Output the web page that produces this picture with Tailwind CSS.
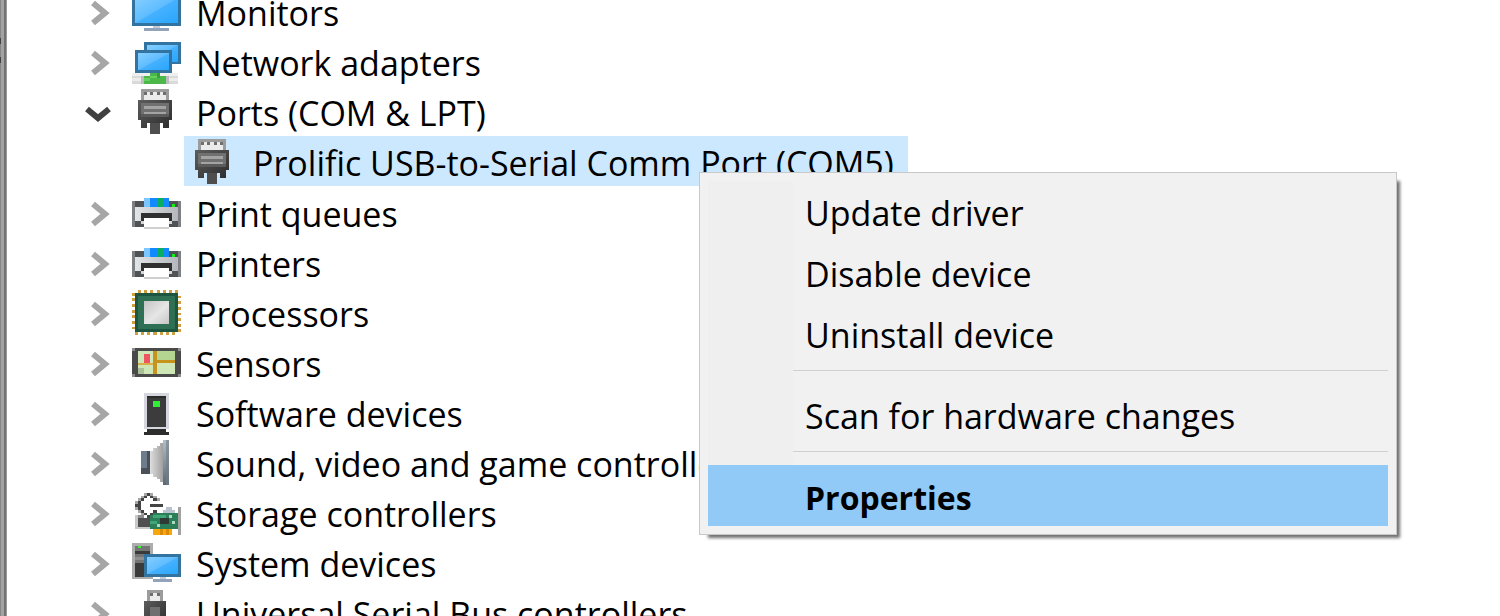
<!DOCTYPE html>
<html lang="en">
<head>
  <meta charset="UTF-8" />
  <meta name="viewport" content="width=device-width, initial-scale=1.0" />
  <title>Device Manager</title>
  <script src="https://cdn.jsdelivr.net/npm/@tailwindcss/browser@4"></script>
</head>
<body class="relative flex h-screen overflow-hidden bg-white font-['Open_Sans','Noto_Sans',sans-serif] text-[34px] text-black">

  <!-- Icon sheet, every icon sits on a 16x16 grid -->
  <svg class="absolute h-0 w-0" aria-hidden="true">
    <defs>
      <linearGradient id="screen" x1="0" y1="0" x2="1" y2="1">
        <stop offset="0" stop-color="#86cfff" />
        <stop offset=".5" stop-color="#5fbcff" />
        <stop offset=".52" stop-color="#45b1ff" />
        <stop offset="1" stop-color="#2aa6fb" />
      </linearGradient>
      <linearGradient id="metal" x1="0" y1="0" x2="1" y2="1">
        <stop offset="0" stop-color="#c4c4c4" />
        <stop offset=".55" stop-color="#e6e6e6" />
        <stop offset="1" stop-color="#c6c6c6" />
      </linearGradient>
      <linearGradient id="body" x1="0" y1="0" x2="1" y2="0">
        <stop offset="0" stop-color="#e2e4e6" />
        <stop offset="1" stop-color="#b4b8bc" />
      </linearGradient>
      <linearGradient id="cone" x1="0" y1="0" x2="1" y2="0">
        <stop offset="0" stop-color="#dcdcdc" />
        <stop offset="1" stop-color="#a2a2a2" />
      </linearGradient>
      <linearGradient id="rim" x1="0" y1="0" x2="0" y2="1">
        <stop offset="0" stop-color="#b4bec8" />
        <stop offset="1" stop-color="#5c6873" />
      </linearGradient>
      <linearGradient id="shell" x1="0" y1="0" x2="1" y2="1">
        <stop offset="0" stop-color="#5c5c5c" />
        <stop offset="1" stop-color="#2c2c2c" />
      </linearGradient>

      <g id="monitor">
        <path fill="#33739f" d="M0 2h16v11H0z" />
        <path fill="url(#screen)" d="M1 3h14v9H1z" />
        <path fill="#c3ccd6" d="M7 13h2v1H7z" />
        <path fill="#93a3b9" d="M4 14h8v1H4z" />
      </g>

      <g id="network">
        <path fill="#33739f" d="M4 1h12v8H4z" />
        <path fill="url(#screen)" d="M5 2h10v6H5z" />
        <path fill="#33739f" d="M1 4h12v8H1z" />
        <path fill="url(#screen)" d="M2 5h10v6H2z" />
        <path fill="#efefef" d="M0 12h15v1H0z" />
        <path fill="#dadada" d="M0 13h15v3H0z" />
        <path fill="#ececec" d="M0 14h15v1H0z" />
        <path fill="#bdbdbd" d="M3 13h1v3H3zM11 13h1v3h-1z" />
        <path fill="#4cb84a" d="M6 12h3v1h2v3H4v-3h2z" />
        <path fill="#65cf5f" d="M6 13h2v1H6zM4 14h2v1H4z" />
        <path fill="#38a03a" d="M8 12h1v2H8z" />
      </g>

      <g id="port">
        <path fill="#9c9c9c" d="M3 0h9v4H3z" />
        <path fill="#ebebeb" d="M4 1h7v3H4z" />
        <path fill="#6e6e6e" d="M4 1h1v1H4zM6 1h1v1H6zM8 1h1v1H8zM10 1h1v1h-1z" />
        <path fill="url(#shell)" d="M2 4h11v7H2zM3 11h9v1H3zM3 12h2v2H3zM10 12h2v2h-2z" />
        <path fill="#707070" d="M3 5h9v5H3z" />
        <path fill="#5a5a5a" d="M3 9h9v1H3z" />
        <path fill="#a3a3a3" d="M4 6h7v1H4zM4 8h7v1H4z" />
        <path fill="#4e4e4e" d="M6 12h3v4H6z" />
      </g>

      <g id="printer">
        <path fill="#4f5355" d="M0 4h4v2H0zM12 4h4v2h-4zM0 11h4v2H0zM12 11h4v2h-4z" />
        <path fill="#7d8183" d="M0 4h1v9H0zM15 4h1v9h-1z" />
        <path fill="url(#body)" d="M1 6h14v5H1z" />
        <path fill="#7cc5ff" d="M4 3h2v3H4z" />
        <path fill="#128aff" d="M6 3h2v3H6zM10 3h2v3h-2z" />
        <path fill="#0aae62" d="M8 3h2v3H8z" />
        <path fill="#10f010" d="M13 5h1v1h-1z" />
        <path fill="#2f2f2f" d="M3 8h10v3H3z" />
        <path fill="#d9d9d9" d="M3 11h1v1H3zM12 11h1v1h-1z" />
        <path fill="#fff" d="M4 10h8v3H4z" />
        <path fill="#cfcfcf" d="M4 13h8v1H4z" />
      </g>

      <g id="processor">
        <path fill="#d0a040" d="M2 0h1v1H2zM4 0h1v1H4zM6 0h1v1H6zM8 0h1v1H8zM10 0h1v1h-1zM12 0h1v1h-1zM14 0h1v1h-1zM1 15h1v1H1zM3 15h1v1H3zM5 15h1v1H5zM7 15h1v1H7zM9 15h1v1H9zM11 15h1v1h-1zM13 15h1v1h-1zM0 1h1v1H0zM0 3h1v1H0zM0 5h1v1H0zM0 7h1v1H0zM0 9h1v1H0zM0 11h1v1H0zM0 13h1v1H0zM15 2h1v1h-1zM15 4h1v1h-1zM15 6h1v1h-1zM15 8h1v1h-1zM15 10h1v1h-1zM15 12h1v1h-1zM15 14h1v1h-1z" />
        <path fill="#1d5640" d="M1 1h14v14H1z" />
        <path fill="#2f6f53" d="M2 2h12v12H2z" />
        <path fill="url(#metal)" d="M4 4h8v8H4z" />
      </g>

      <g id="sensor">
        <path fill="#4a4a4a" d="M0 3h16v10H0z" />
        <path fill="#8c8c8c" d="M0 3h1v1H0zM15 3h1v1h-1zM0 12h1v1H0zM15 12h1v1h-1z" />
        <path fill="#cfe6b6" d="M2 4h12v8H2z" />
        <path fill="#b4d592" d="M8 4h6v3H8z" />
        <path fill="#a9bf98" d="M2 10h2v2H2z" />
        <path fill="#d8b04a" d="M2 8h6v1H2z" />
        <path fill="#c6931c" d="M7 4h1v8H7zM8 7h6v1H8z" />
        <path fill="#ee5560" d="M4 5h2v3H4z" />
      </g>

      <g id="software">
        <path fill="#d6d7de" d="M4 1h8v13H4z" />
        <path fill="#3c3c3c" d="M5 2h6v11H5z" />
        <path fill="#2b2b2b" d="M5 2h6v1H5z" />
        <path fill="#2fee35" d="M7 4h2v2H7z" />
        <path fill="#2d2d2d" d="M5 14h6v1h1v1H4v-1h1z" />
      </g>

      <g id="sound">
        <path fill="#6d7d8b" d="M3 4h2v8H3z" />
        <path fill="#4a5058" d="M5 4h1v8H5zM3 10h3v2H3z" />
        <path fill="url(#cone)" d="M6 4h1V3h1V2h1V1h1v14H9v-1H8v-1H7v-1H6z" />
        <path fill="url(#rim)" d="M10 0h2v16h-2z" />
        <path fill="#6f7b87" fill-opacity=".6" d="M11 0h1v16h-1z" />
      </g>

      <g id="storage">
        <path fill="#c9c9c9" d="M1 9h1v5H1zM2 13h4v1H2z" />
        <path fill="#505050" d="M2 10h4v3H2z" />
        <path fill="#8e8e8e" d="M2 9h2v1H2z" />
        <path fill="#444" d="M5 1h1v1H5zM4 2h1v1H4zM6 2h1v1H6zM3 3h1v1H3zM7 3h1v1H7zM2 4h1v1H2zM1 5h2v1H1zM2 6h1v1H2zM3 7h1v1H3zM4 8h1v1H4zM5 9h1v1H5zM6 8h1v1H6zM7 7h1v1H7zM6 5h4v1H6z" />
        <path fill="#a6a6a6" d="M4 1h1v1H4zM6 1h1v1H6zM3 2h1v1H3zM7 2h1v1H7zM2 3h1v1H2zM8 3h1v1H8zM1 4h1v1H1zM1 6h1v1H1zM2 7h1v1H2zM3 8h1v1H3z" />
        <path fill="#b9c2cc" d="M11 6h2v1h1v1h-4V7h1z" />
        <path fill="#2b7f58" d="M7 8h8v6H6V9h1z" />
        <path fill="#3fa677" d="M7 9h4v1H7zM6 11h2v1H6z" />
        <path fill="#2f3a36" d="M9 10h3v2H9z" />
        <path fill="#a9d8c0" d="M8 12h1v1H8zM12 9h1v1h-1zM13 11h1v1h-1z" />
        <path fill="#f7a60c" d="M7 14h6v2H7z" />
        <path fill="#d98a06" d="M9 14h1v2H9zM11 14h1v2h-1z" />
        <path fill="#a2a2a2" d="M15 6h1v10h-1z" />
      </g>

      <g id="system">
        <path fill="#adadad" d="M0 1h7v13H0z" />
        <path fill="#757575" d="M1 2h5v11H1z" />
        <path fill="#3a3a3a" d="M1 4h5v1H1zM1 8h3v5H1z" />
        <path fill="#8e8e8e" d="M1 6h3v1H1z" />
        <path fill="#3df03d" d="M2 2h1v1H2z" />
        <path fill="#33739f" d="M4 5h12v8H4z" />
        <path fill="url(#screen)" d="M5 6h10v6H5z" />
        <path fill="#c3ccd6" d="M9 13h2v1H9z" />
        <path fill="#93a3b9" d="M7 14h6v1H7z" />
      </g>

      <g id="usb">
        <path fill="#9c9c9c" d="M5 0h5v4H5z" />
        <path fill="#ebebeb" d="M6 1h3v3H6z" />
        <path fill="#6e6e6e" d="M6 1h1v1H6zM8 1h1v1H8z" />
        <path fill="url(#shell)" d="M4 4h7v9H4z" />
        <path fill="#707070" d="M6 6h3v6H6z" />
        <path fill="#4e4e4e" d="M6 13h3v3H6z" />
      </g>
    </defs>
  </svg>

  <!-- Window edge -->
  <div class="flex w-[7px] shrink-0">
    <div class="w-px bg-[#868686]">
      <div class="mt-[38px] h-[6px] bg-[#404040]"></div>
      <div class="mt-[13px] h-[6px] bg-[#404040]"></div>
    </div>
    <div class="w-[3px] bg-[#a2a2a2]"></div>
    <div class="w-[2px] bg-[#727272]"></div>
    <div class="w-px bg-[#9a9a9a]"></div>
  </div>

  <main class="min-w-0 flex-1 pl-[77px]">
    <ul id="devices" role="tree" aria-label="Devices" class="-mt-[14px]"></ul>
  </main>

  <!-- Context menu -->
  <div role="menu" aria-label="Device actions" class="absolute left-[699px] top-[172px] w-[698px] border border-[#c8c8c8] bg-[#f1f1f1] p-2 shadow-[6px_6px_3px_-3px_#707070]">
    <div class="bg-linear-to-r from-[#efefef] from-[85px] to-[#f1f1f1] to-[85px]">
      <button role="menuitem" class="block h-[61px] w-full pl-[97px] pt-1 text-left leading-[57px] hover:bg-[#91c9f7]">Update driver</button>
      <button role="menuitem" class="block h-[61px] w-full pl-[97px] pt-1 text-left leading-[57px] hover:bg-[#91c9f7]">Disable device</button>
      <button role="menuitem" class="block h-[61px] w-full pl-[97px] pt-1 text-left leading-[57px] hover:bg-[#91c9f7]">Uninstall device</button>
      <div role="separator" class="ml-[85px] h-5 pt-[6px]"><div class="h-px bg-[#d0d0d0]"></div></div>
      <button role="menuitem" class="block h-[61px] w-full pl-[97px] pt-1 text-left leading-[57px] hover:bg-[#91c9f7]">Scan for hardware changes</button>
      <div role="separator" class="ml-[85px] h-5 pt-[6px]"><div class="h-px bg-[#d0d0d0]"></div></div>
      <button role="menuitem" class="block h-[61px] w-full bg-[#91c9f7] pl-[97px] pt-1 text-left text-[32px] font-bold leading-[57px]">Properties</button>
    </div>
  </div>

  <script>
    const devices = [
      { name: "Monitors", icon: "monitor" },
      { name: "Network adapters", icon: "network" },
      { name: "Ports (COM & LPT)", icon: "port", children: [
        { name: "Prolific USB-to-Serial Comm Port (COM5)", icon: "port" }
      ] },
      { name: "Print queues", icon: "printer" },
      { name: "Printers", icon: "printer" },
      { name: "Processors", icon: "processor" },
      { name: "Sensors", icon: "sensor" },
      { name: "Software devices", icon: "software" },
      { name: "Sound, video and game controllers", icon: "sound" },
      { name: "Storage controllers", icon: "storage" },
      { name: "System devices", icon: "system" },
      { name: "Universal Serial Bus controllers", icon: "usb" }
    ];

    const icon = (id) => `
      <svg class="h-[45px] w-[49px] shrink-0" viewBox="0 0 16 16" preserveAspectRatio="none" shape-rendering="crispEdges" aria-hidden="true"><use href="#${id}" /></svg>`;

    const label = (text) => `<span class="whitespace-nowrap pt-1 leading-[46px]">${text.replace("&", "&amp;")}</span>`;

    const chevron = (open) => open
      ? `<path d="M3 11 14 20 25 11" fill="none" stroke="#404040" stroke-width="6" />`
      : `<path d="M9 5 21 15 9 25" fill="none" stroke="#a6a6a6" stroke-width="6" />`;

    document.getElementById("devices").innerHTML = devices.map((d) => `
      <li role="treeitem" aria-expanded="${!!d.children}">
        <div class="flex h-[50px] items-center">
          <button class="mr-5 mt-1 h-[30px] w-7 shrink-0" aria-label="Toggle ${d.name.replace("&", "&amp;")}">
            <svg class="h-[30px] w-7" viewBox="0 0 28 30">${chevron(d.children)}</svg>
          </button>
          <div class="flex items-center gap-[15px]">${icon(d.icon)}${label(d.name)}</div>
        </div>
        ${d.children ? `<ul role="group" class="mb-px ml-[100px]">${d.children.map((c) => `
          <li role="treeitem" aria-selected="true" class="flex h-[50px] w-fit items-center gap-[15px] bg-[#cce8ff] pl-[5px] pr-[14px]">${icon(c.icon)}${label(c.name)}</li>`).join("")}
        </ul>` : ""}
      </li>`).join("");
  </script>
</body>
</html>
